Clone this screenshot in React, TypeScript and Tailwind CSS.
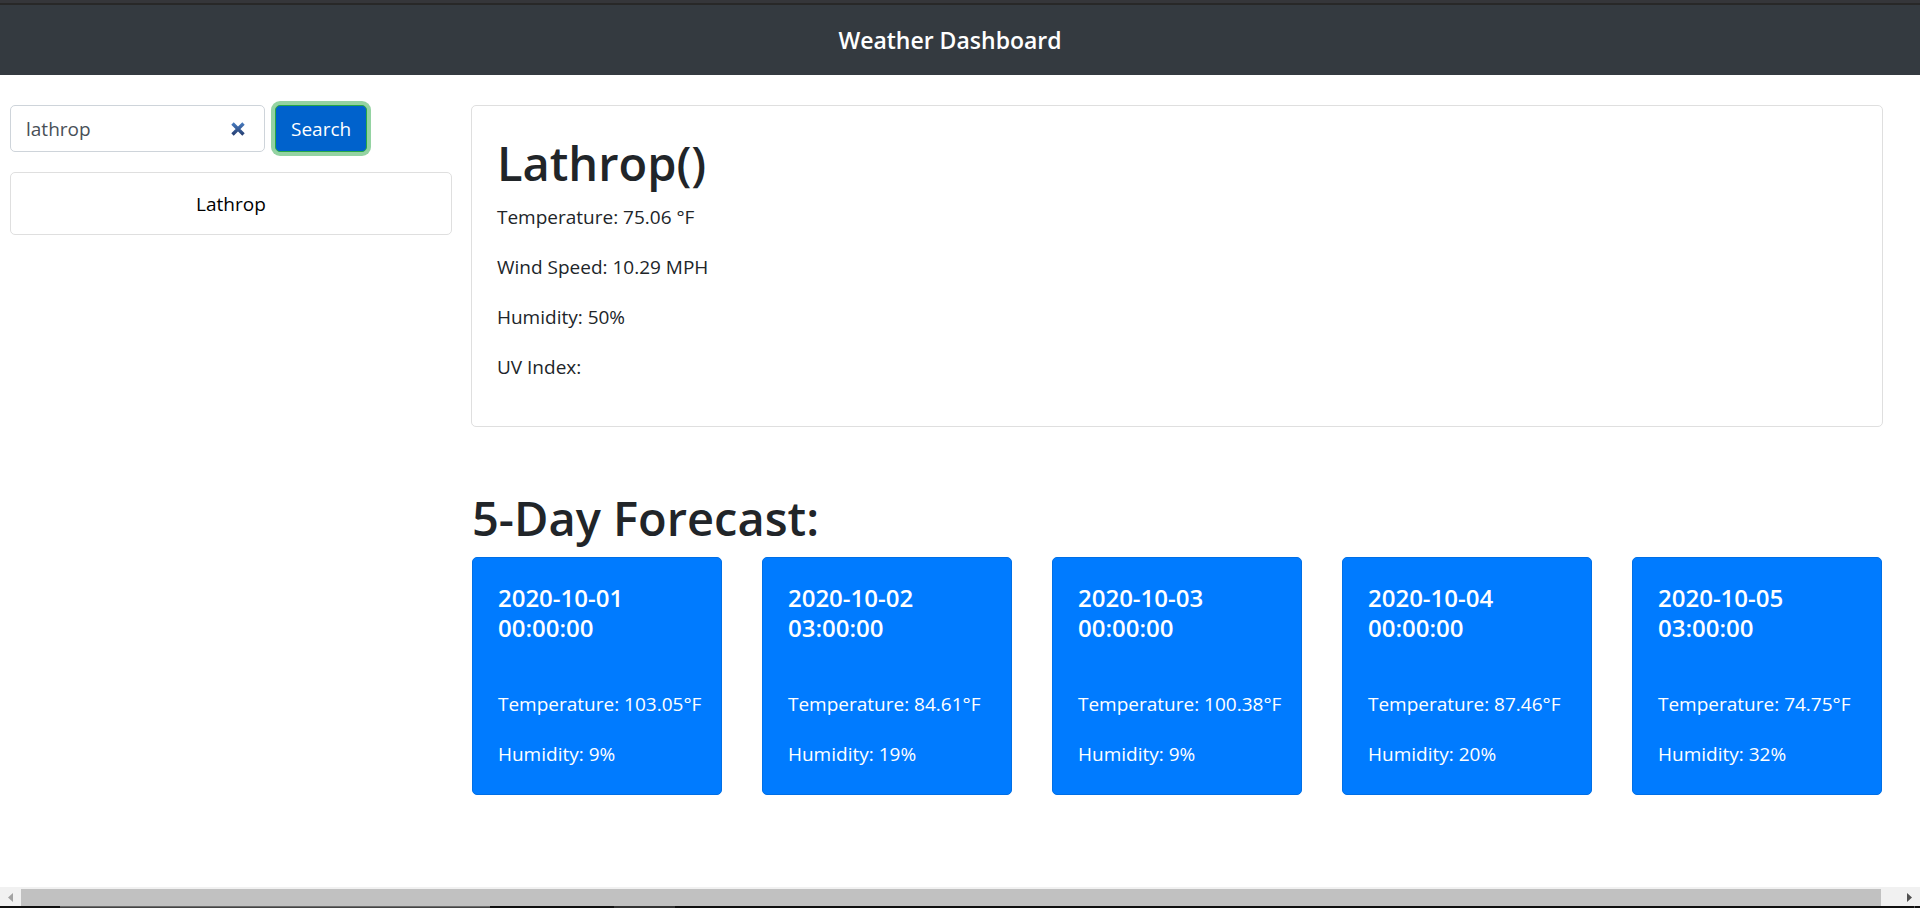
import { useState } from "react";

const conditions = [
  "Temperature: 75.06 °F",
  "Wind Speed: 10.29 MPH",
  "Humidity: 50%",
  "UV Index:",
];

const forecast = [
  { date: "2020-10-01", time: "00:00:00", temperature: "103.05", humidity: "9" },
  { date: "2020-10-02", time: "03:00:00", temperature: "84.61", humidity: "19" },
  { date: "2020-10-03", time: "00:00:00", temperature: "100.38", humidity: "9" },
  { date: "2020-10-04", time: "00:00:00", temperature: "87.46", humidity: "20" },
  { date: "2020-10-05", time: "03:00:00", temperature: "74.75", humidity: "32" },
];

function SearchForm() {
  const [query, setQuery] = useState("lathrop");
  return (
    <form className="flex items-center gap-2.5" onSubmit={(e) => e.preventDefault()}>
      <div className="flex h-[47px] w-[255px] items-center rounded-[5px] border border-[#ced4da] pr-[19px] pl-[15px]">
        <input
          type="text"
          aria-label="City"
          value={query}
          onChange={(e) => setQuery(e.target.value)}
          className="min-w-0 flex-1 bg-transparent text-[19px] text-[#495057] outline-none"
        />
        <button type="button" aria-label="Clear" onClick={() => setQuery("")}>
          <svg width="14" height="14" viewBox="0 0 14 14">
            <defs>
              <linearGradient id="clear" x1="0" y1="0" x2="0" y2="14" gradientUnits="userSpaceOnUse">
                <stop offset="0" stopColor="#4a7fc4" />
                <stop offset="1" stopColor="#243a6c" />
              </linearGradient>
            </defs>
            <path d="M1.5 1.5L12.5 12.5M12.5 1.5L1.5 12.5" stroke="url(#clear)" strokeWidth="3.4" />
          </svg>
        </button>
      </div>
      <button
        type="submit"
        className="h-[47px] rounded-[5px] border border-[#28a745] bg-[#0062cc] px-[15px] text-[19px] text-white ring-4 ring-[#94d3a2]"
      >
        Search
      </button>
    </form>
  );
}

function ForecastCard({ day }: { day: (typeof forecast)[number] }) {
  return (
    <article className="rounded-[5px] border border-[#006fe6] bg-[#007bff] p-[25px] text-white">
      <h5 className="mb-[46px] text-[24px] leading-[30px] font-semibold">
        {day.date}
        <br />
        {day.time}
      </h5>
      <p className="mb-5 whitespace-nowrap">Temperature: {day.temperature}°F</p>
      <p>Humidity: {day.humidity}%</p>
    </article>
  );
}

function ScrollBar() {
  return (
    <div className="flex h-[19px] items-center bg-[#f1f1f1]">
      <svg className="w-[21px]" height="19" viewBox="0 0 21 19">
        <path d="M13 6v9l-5-4.500z" fill="#a3a3a3" />
      </svg>
      <div className="h-[17px] flex-1 self-end bg-[#c1c1c1]" />
      <svg className="w-[39px]" height="19" viewBox="0 0 39 19">
        <path d="M26 6v9l5-4.500z" fill="#505050" />
      </svg>
    </div>
  );
}

export default function App() {
  return (
    <div className="flex min-h-screen flex-col bg-white font-['Open_Sans','Noto_Sans',sans-serif] text-[19px] leading-[30px] text-[#212529]">
      <div className="h-[5px] border-b-2 border-[#282828] bg-[#35363a]" />
      <header className="flex h-[70px] items-center justify-center bg-[#343a40] pr-5">
        <h1 className="text-[23px] leading-[38px] font-semibold text-white">Weather Dashboard</h1>
      </header>

      <main className="grid flex-1 grid-cols-[313fr_1000fr] content-start gap-[19px] pt-[30px] pr-[37px] pl-2.5">
        <aside>
          <SearchForm />
          <ul className="mt-5">
            <li className="flex h-[63px] items-center justify-center rounded-[5px] border border-[#dfdfdf] text-black">
              Lathrop
            </li>
          </ul>
        </aside>

        <div>
          <section className="rounded-[5px] border border-[#dfdfdf] px-[25px] pt-[26px] pb-6">
            <h2 className="mb-2 text-[47px] leading-[62px] font-semibold">Lathrop()</h2>
            {conditions.map((line) => (
              <p key={line} className="mb-5">
                {line}
              </p>
            ))}
          </section>

          <section className="mt-[60px] px-px">
            <h2 className="mb-2 text-[47px] leading-[62px] font-semibold">5-Day Forecast:</h2>
            <div className="grid grid-cols-5 gap-10">
              {forecast.map((day) => (
                <ForecastCard key={day.date} day={day} />
              ))}
            </div>
          </section>
        </div>
      </main>

      <ScrollBar />
      <div className="flex h-0.5 bg-[#101010]">
        <div className="ml-[60px] w-[430px] border-t border-[#6a6a6a] bg-[#444444]" />
        <div className="ml-[124px] w-[61px] bg-[#333333]" />
        <div className="mr-[5px] ml-auto w-px bg-[#555555]" />
      </div>
    </div>
  );
}
